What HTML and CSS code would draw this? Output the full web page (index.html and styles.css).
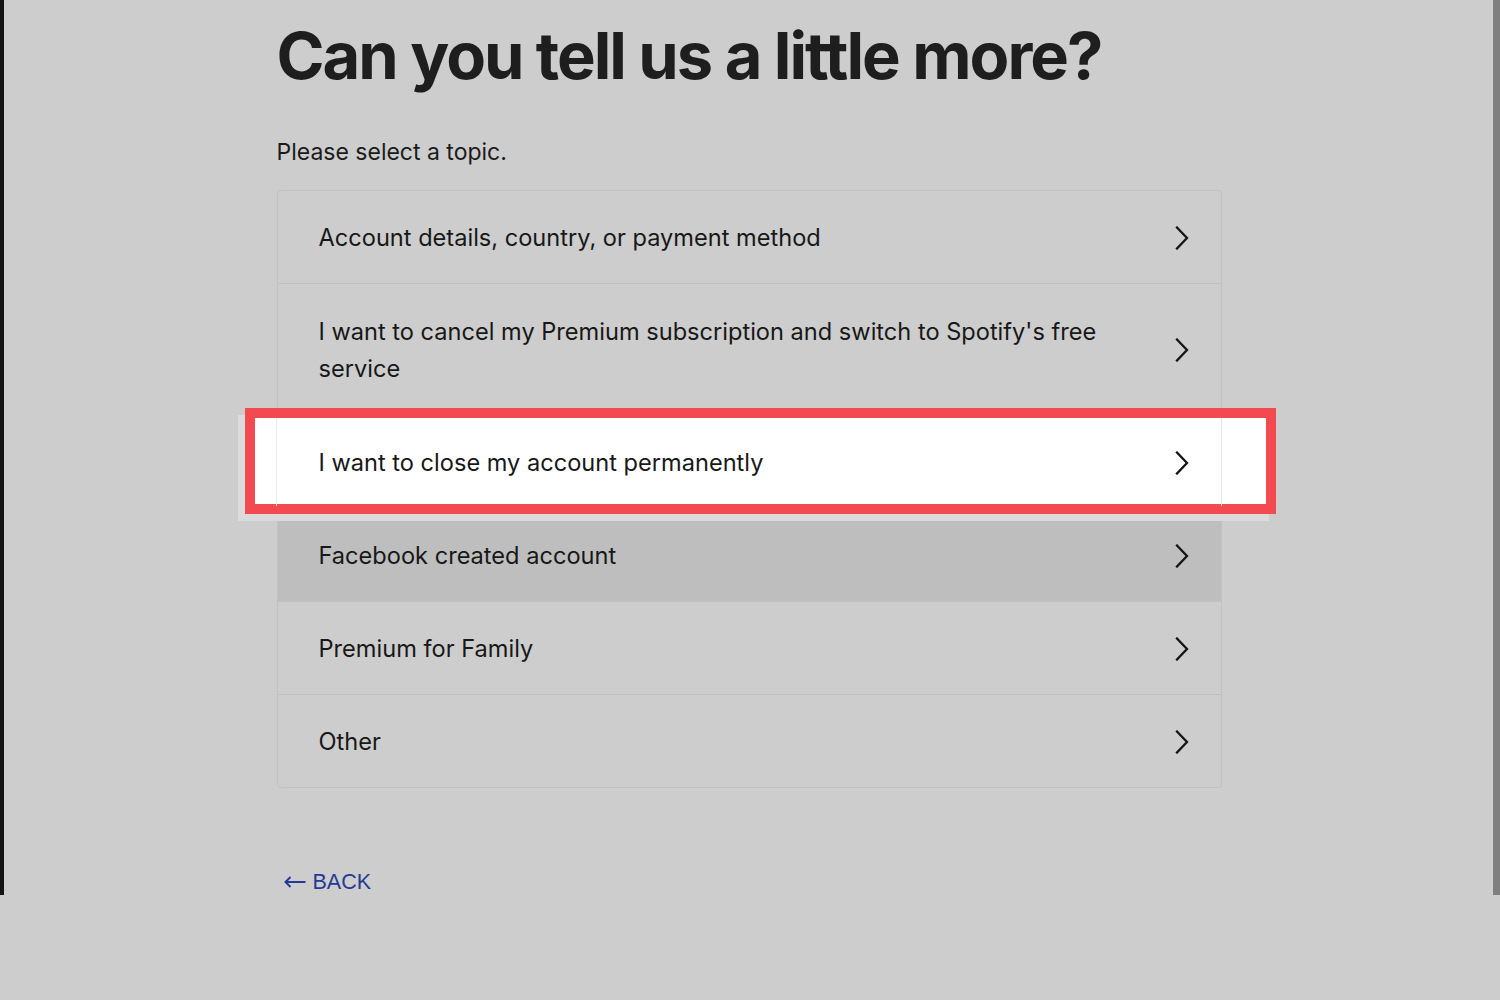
FILE: index.html
```html
<!DOCTYPE html>
<html lang="en">
<head>
<meta charset="utf-8">
<title>Can you tell us a little more?</title>
<link rel="stylesheet" href="styles.css">
</head>
<body>
<div class="screen">
  <div class="edge-left"></div>
  <main class="main">
    <div class="content">
      <h1 class="title">Can you tell us a little more?</h1>
      <p class="intro">Please select a topic.</p>
      <ul class="topics">
        <li class="topic"><span class="topic-text">Account details, country, or payment method</span><svg class="chev" viewBox="0 0 14 24" width="14" height="24"><path d="M2 1.5 L12 12 L2 22.5"/></svg></li>
        <li class="topic topic-multi"><span class="topic-text">I want to cancel my Premium subscription and switch to Spotify's free service</span><svg class="chev" viewBox="0 0 14 24" width="14" height="24"><path d="M2 1.5 L12 12 L2 22.5"/></svg></li>
        <li class="topic topic-highlight"><span class="topic-text">I want to close my account permanently</span><svg class="chev" viewBox="0 0 14 24" width="14" height="24"><path d="M2 1.5 L12 12 L2 22.5"/></svg></li>
        <li class="topic topic-hover"><span class="topic-text">Facebook created account</span><svg class="chev" viewBox="0 0 14 24" width="14" height="24"><path d="M2 1.5 L12 12 L2 22.5"/></svg></li>
        <li class="topic"><span class="topic-text">Premium for Family</span><svg class="chev" viewBox="0 0 14 24" width="14" height="24"><path d="M2 1.5 L12 12 L2 22.5"/></svg></li>
        <li class="topic"><span class="topic-text">Other</span><svg class="chev" viewBox="0 0 14 24" width="14" height="24"><path d="M2 1.5 L12 12 L2 22.5"/></svg></li>
      </ul>
      <a class="back" href="#"><svg class="back-arrow" viewBox="0 0 22 12" width="22" height="12"><path d="M1.5 6 H21.5 M6.5 1 L1.5 6 L6.5 11"/></svg>BACK</a>
    </div>
  </main>
  <div class="edge-right"></div>
</div>
<div class="below"></div>
</body>
</html>
```
FILE: styles.css
```css
*, *::before, *::after { box-sizing: border-box; }
html, body { margin: 0; padding: 0; }
body {
  background: #cdcdcd;
  font-family: Inter, "Noto Sans", sans-serif;
  color: #1b1b1b;
  width: 1500px;
  height: 1000px;
  overflow: hidden;
}
.screen {
  display: flex;
  height: 895px;
}
.edge-left {
  width: 4px;
  background: #141414;
  flex: none;
}
.edge-right {
  width: 7px;
  background: #7f7f7f;
  flex: none;
}
.main {
  flex: 1;
  display: flex;
  justify-content: center;
  padding-left: 1px;
}
.content {
  width: 945px;
}
.title {
  margin: 16px 0 0;
  font-size: 65px;
  line-height: 80px;
  font-weight: 700;
  letter-spacing: -2px;
  color: #1e1e1e;
}
.intro {
  margin: 41px 0 0;
  font-size: 23px;
  line-height: 30px;
  color: #1b1b1b;
}
.topics {
  list-style: none;
  margin: 23px 0 0;
  padding: 0;
  border: 1px solid #c2c2c2;
  border-radius: 4px;
}
.topic {
  display: flex;
  align-items: center;
  justify-content: space-between;
  padding: 28px 32px 27px 41px;
  border-bottom: 1px solid #c0c0c0;
  font-size: 23.6px;
  line-height: 37px;
  color: #181818;
}
.topic-multi { padding-top: 29px; padding-bottom: 28px; }
.topic:last-child { border-bottom: none; }
.topic-text { max-width: 800px; position: relative; z-index: 2; }
.chev {
  flex: none;
  position: relative;
  z-index: 2;
  fill: none;
  stroke: #151515;
  stroke-width: 2.3;
  stroke-linecap: square;
}
.topic-hover { background: #bebebe; }
.topic-highlight { position: relative; }
.topic-highlight::before {
  content: "";
  position: absolute;
  left: -33px;
  top: -8px;
  width: 1031px;
  height: 106px;
  background: #ffffff;
  border: 10px solid #f24a4f;
  box-shadow: -7px 7px 0 0 #dbdbdb;
  z-index: 0;
}
.topic-highlight::after {
  content: "";
  position: absolute;
  left: -2px;
  right: -1px;
  top: 2px;
  bottom: 2px;
  border-left: 1px solid #ececec;
  border-right: 1px solid #e6e6e6;
  z-index: 1;
}
.back {
  display: inline-flex;
  align-items: center;
  margin: 80px 0 0 7px;
  font-family: "Liberation Sans", Arial, sans-serif;
  font-size: 21.5px;
  line-height: 28px;
  color: #233b95;
  text-decoration: none;
}
.back-arrow {
  margin-right: 7px;
  fill: none;
  stroke: #233b95;
  stroke-width: 2;
}
.below {
  height: 105px;
  background: #cdcdcd;
}
```
